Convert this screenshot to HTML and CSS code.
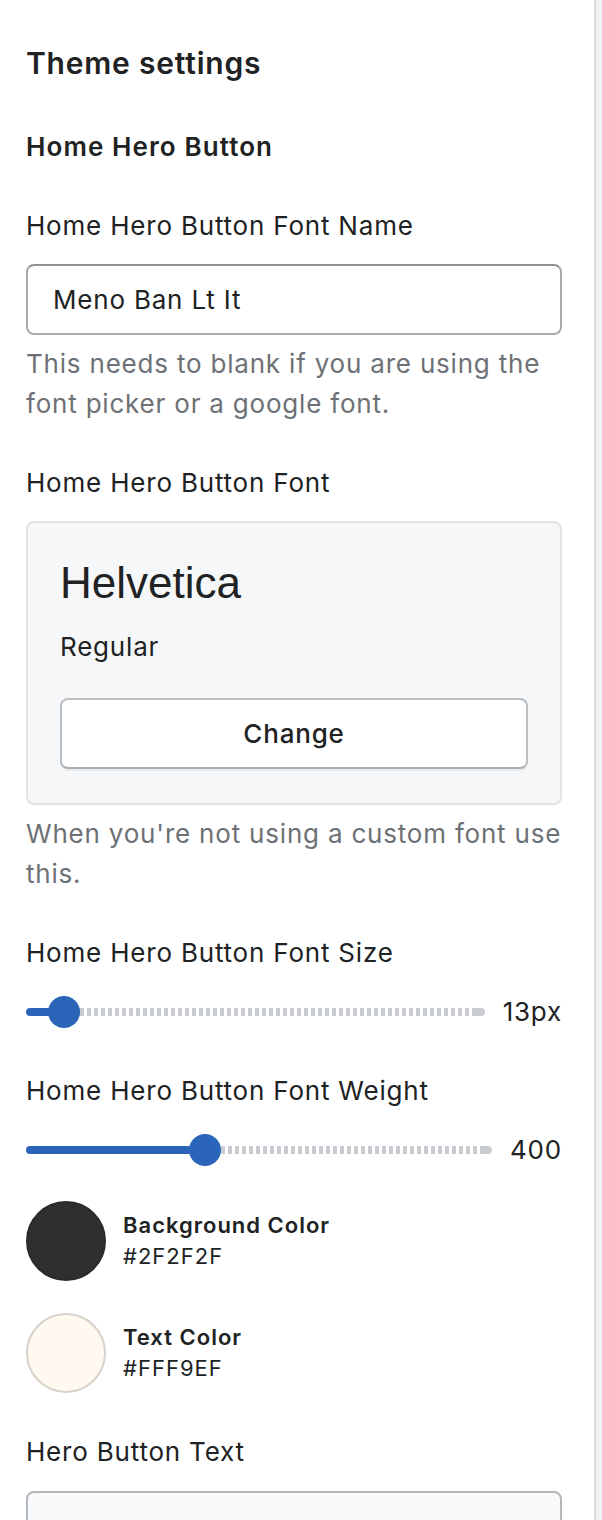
FILE: index.html
```html
<!DOCTYPE html>
<html lang="en">
<head>
<meta charset="utf-8">
<title>Theme settings</title>
<link rel="stylesheet" href="styles.css">
</head>
<body>
<div class="panel">
  <h1 class="title">Theme settings</h1>
  <h2 class="group">Home Hero Button</h2>

  <div class="field">
    <label class="label">Home Hero Button Font Name</label>
    <div class="input">Meno Ban Lt It</div>
    <p class="help">This needs to blank if you are using the font picker or a google font.</p>
  </div>

  <div class="field">
    <label class="label">Home Hero Button Font</label>
    <div class="font-card">
      <div class="font-name">Helvetica</div>
      <div class="font-style">Regular</div>
      <button class="btn">Change</button>
    </div>
    <p class="help">When you're not using a custom font use this.</p>
  </div>

  <div class="field">
    <label class="label">Home Hero Button Font Size</label>
    <div class="slider">
      <div class="track">
        <div class="fill" style="width:38px"></div>
        <div class="thumb"></div>
        <div class="rest"></div>
      </div>
      <span class="value">13px</span>
    </div>
  </div>

  <div class="field after-slider">
    <label class="label">Home Hero Button Font Weight</label>
    <div class="slider">
      <div class="track">
        <div class="fill" style="width:179px"></div>
        <div class="thumb"></div>
        <div class="rest"></div>
      </div>
      <span class="value">400</span>
    </div>
  </div>

  <div class="swatch-row first">
    <div class="swatch dark"></div>
    <div class="swatch-text">
      <div class="swatch-name">Background Color</div>
      <div class="swatch-hex">#2F2F2F</div>
    </div>
  </div>

  <div class="swatch-row">
    <div class="swatch light"></div>
    <div class="swatch-text">
      <div class="swatch-name">Text Color</div>
      <div class="swatch-hex">#FFF9EF</div>
    </div>
  </div>

  <div class="field">
    <label class="label">Hero Button Text</label>
    <div class="input empty"></div>
  </div>
</div>
</body>
</html>
```

FILE: styles.css
```css
html, body {
  margin: 0;
  padding: 0;
}
body {
  background: #f1f2f4;
  font-family: "Inter", "Noto Sans", sans-serif;
  color: #202223;
  letter-spacing: 0.8px;
  height: 1520px;
  overflow: hidden;
}
.panel {
  width: 536px;
  min-height: 1520px;
  background: #ffffff;
  border-right: 2px solid #dadbde;
  padding: 43px 32px 0 26px;
}
.title {
  margin: 0;
  font-size: 30px;
  line-height: 40px;
  font-weight: 600;
  letter-spacing: 0.8px;
}
.group {
  margin: 44px 0 0;
  font-size: 26px;
  line-height: 40px;
  font-weight: 600;
  letter-spacing: 1.1px;
}
.field {
  margin-top: 39px;
}
.field.after-slider {
  margin-top: 43px;
}
.label {
  display: block;
  font-size: 26px;
  line-height: 40px;
}
.input {
  margin-top: 18px;
  height: 67px;
  border: 2px solid #a6abb0;
  border-top-color: #8d9297;
  border-radius: 8px;
  box-sizing: content-box;
  padding: 0 25px;
  display: flex;
  align-items: center;
  font-size: 26px;
  background: #fff;
}
.input.empty {
  background: #f8f9fa;
  border-color: #b3b8bd;
  margin-top: 19px;
}
.help {
  margin: 9px 0 0;
  font-size: 26px;
  line-height: 40px;
  color: #6d7175;
}
.font-card {
  margin-top: 18px;
  background: #f6f7f9;
  border: 2px solid #e1e3e5;
  border-radius: 8px;
  padding: 34px 32px 34px;
}
.font-name {
  font-family: "Liberation Sans", Arial, sans-serif;
  font-size: 44px;
  line-height: 52px;
  letter-spacing: 0;
}
.font-style {
  margin-top: 18px;
  font-size: 26px;
  line-height: 40px;
}
.btn {
  display: block;
  width: 100%;
  margin-top: 31px;
  height: 71px;
  background: #ffffff;
  border: 2px solid #babfc3;
  border-bottom-color: #a8adb2;
  border-radius: 8px;
  box-shadow: 0 2px 0 rgba(0, 0, 0, 0.05);
  font-family: "Inter", "Noto Sans", sans-serif;
  font-size: 26px;
  letter-spacing: 0.8px;
  font-weight: 500;
  color: #202223;
}
.slider {
  margin-top: 23px;
  display: flex;
  align-items: center;
  gap: 18px;
  height: 32px;
}
.track {
  flex: 1;
  display: flex;
  align-items: center;
  height: 32px;
}
.fill {
  flex: none;
  height: 8px;
  background: #2b65b9;
  border-radius: 4px 0 0 4px;
}
.thumb {
  flex: none;
  width: 32px;
  height: 32px;
  border-radius: 50%;
  background: #2b65b9;
  margin: 0 -16px;
  position: relative;
  z-index: 1;
}
.rest {
  flex: 1;
  height: 8px;
  border-radius: 0 4px 4px 0;
  background:
    linear-gradient(#c9ccd0, #c9ccd0) right / 12px 100% no-repeat,
    repeating-linear-gradient(90deg, #c9ccd0 0 4px, #ffffff 4px 7px);
  background-position: right, 16px 0;
}
.value {
  font-size: 26px;
  line-height: 32px;
  flex: none;
}
.swatch-row {
  display: flex;
  align-items: center;
  gap: 17px;
  margin-top: 32px;
}
.swatch-row.first {
  margin-top: 35px;
}
.swatch {
  width: 80px;
  height: 80px;
  border-radius: 50%;
  box-sizing: border-box;
  flex: none;
}
.swatch.dark {
  background: #2f2f2f;
  border: 2px solid #2a2a2a;
}
.swatch.light {
  background: #fff9ef;
  border: 2px solid #d6d2cb;
}
.swatch-text {
  font-size: 22px;
  line-height: 31px;
  letter-spacing: 1px;
}
.swatch-name {
  font-weight: 600;
}
```
